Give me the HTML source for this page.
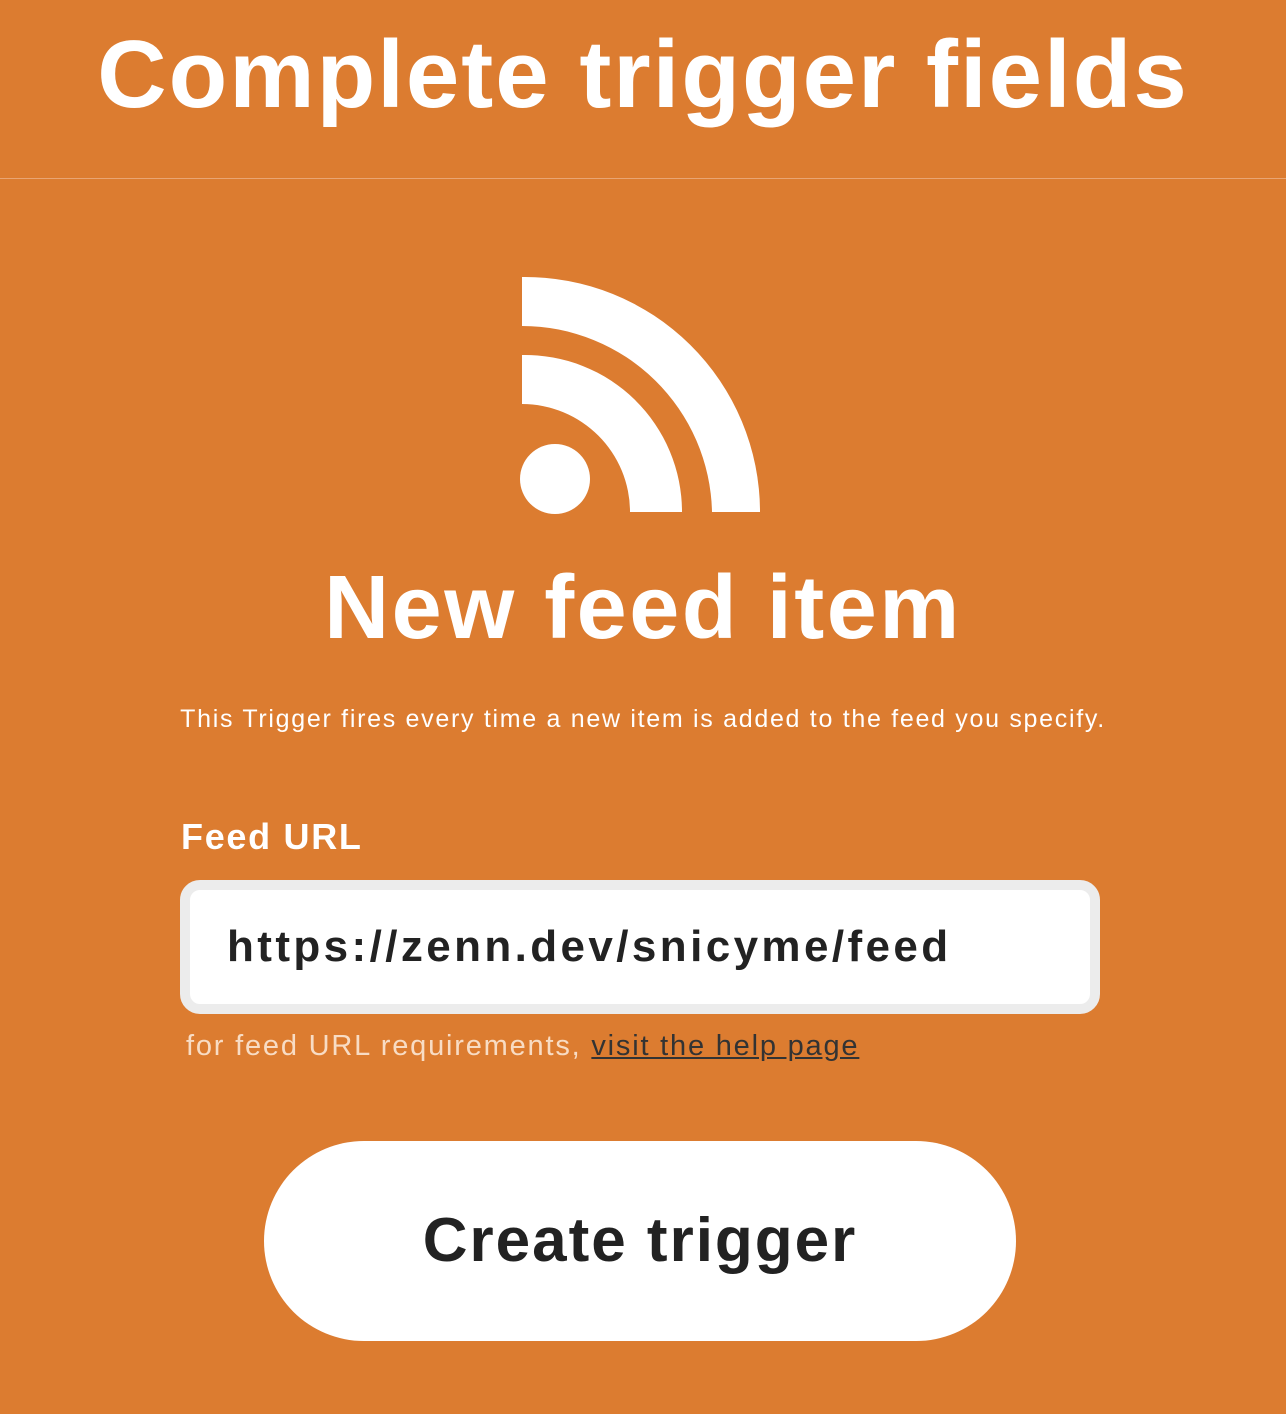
<!DOCTYPE html>
<html><head><meta charset="utf-8"><style>
body{margin:0;width:1286px;height:1414px;background:#dc7c30;font-family:"Liberation Sans",sans-serif;position:relative;overflow:hidden;color:#fff}
.t{position:absolute;left:0;width:1286px;text-align:center;font-weight:bold}
</style></head><body>
<div class="t" style="top:20px;font-size:96px;letter-spacing:2px">Complete trigger fields</div>
<div style="position:absolute;top:178px;left:0;width:1286px;height:1px;background:#e9a573"></div>
<svg style="position:absolute;left:0;top:0" width="1286" height="600">
<path d="M522 277 A235 235 0 0 1 760 512 L712 512 A190 190 0 0 0 522 326 Z" fill="#fff"/>
<path d="M522 355 A157 157 0 0 1 682 512 L630 512 A108 108 0 0 0 522 404 Z" fill="#fff"/>
<circle cx="555" cy="479" r="35" fill="#fff"/>
</svg>
<div class="t" style="top:557px;font-size:90px;letter-spacing:2.5px">New feed item</div>
<div class="t" style="top:705px;font-size:25px;font-weight:normal;letter-spacing:1.7px">This Trigger fires every time a new item is added to the feed you specify.</div>
<div style="position:absolute;left:181px;top:816px;font-size:36px;font-weight:bold;letter-spacing:1.7px">Feed URL</div>
<div style="position:absolute;left:180px;top:880px;height:114px;border:10px solid #ececec;border-radius:20px;background:#fff;color:#222;font-weight:bold;font-size:44px;line-height:114px;padding-left:37px;width:863px;letter-spacing:3.4px">https://zenn.dev/snicyme/feed</div>
<div style="position:absolute;left:186px;top:1030px;font-size:29px;color:#f8dcc4;letter-spacing:1.8px">for feed URL requirements, <span style="color:#333;text-decoration:underline">visit the help page</span></div>
<div style="position:absolute;left:264px;top:1141px;width:752px;height:200px;border-radius:100px;background:#fff;color:#222;font-weight:bold;font-size:62px;line-height:200px;text-align:center;letter-spacing:2px">Create trigger</div>
</body></html>
